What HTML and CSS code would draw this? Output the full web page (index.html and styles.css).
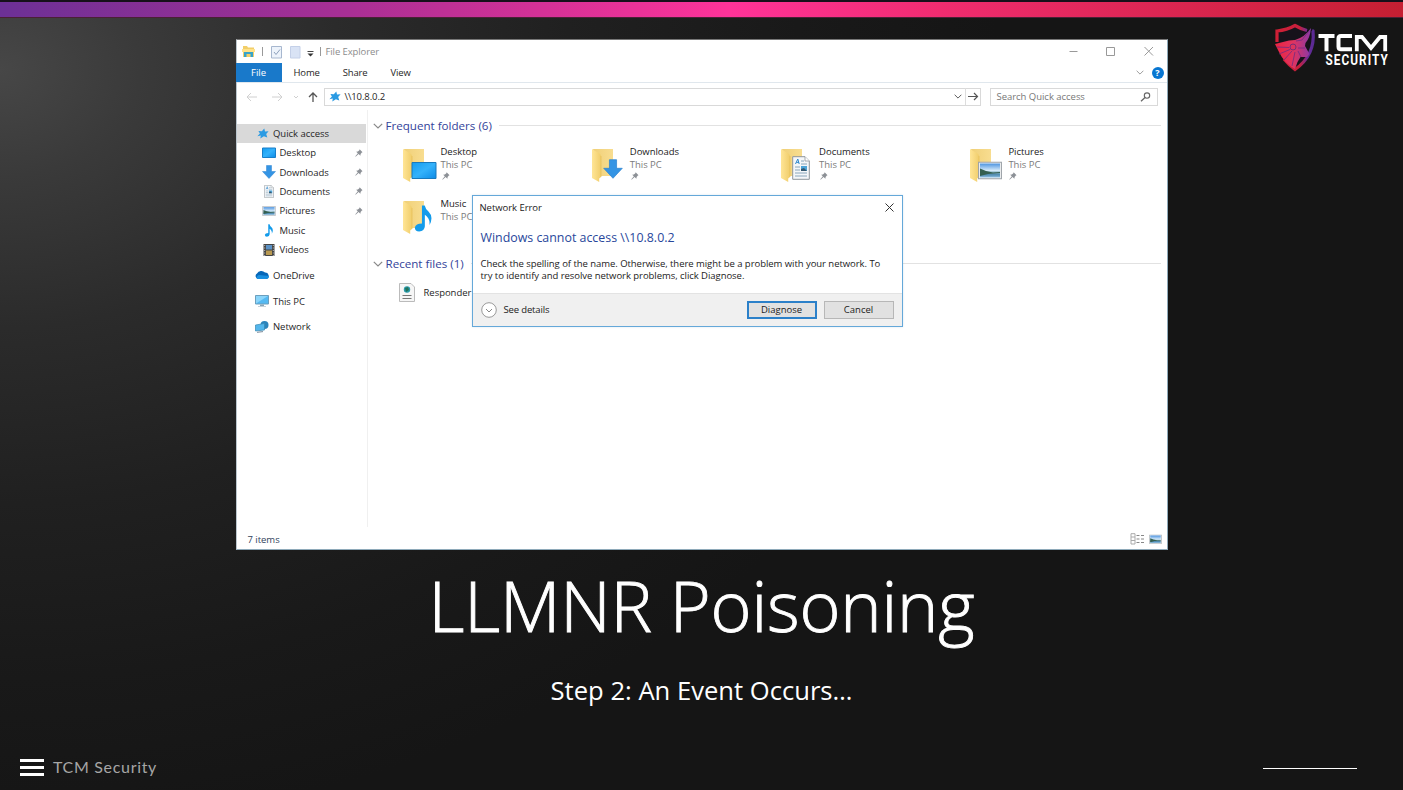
FILE: index.html
```
<!DOCTYPE html>
<html lang="en">
<head>
<meta charset="utf-8">
<title>LLMNR Poisoning</title>
<link rel="stylesheet" href="styles.css">
</head>
<body>
<svg class="defs" width="0" height="0" aria-hidden="true">
  <defs>
    <linearGradient id="gFold" x1="0" y1="0" x2="1" y2="0"><stop offset="0" stop-color="#ffe596"/><stop offset="1" stop-color="#f0cd6b"/></linearGradient>
    <linearGradient id="gBack" x1="0" y1="0" x2="1" y2="0"><stop offset="0" stop-color="#f0d078"/><stop offset="1" stop-color="#f8dd90"/></linearGradient>
    <linearGradient id="gBlue" x1="0" y1="0" x2="1" y2="1"><stop offset="0" stop-color="#129cf0"/><stop offset=".5" stop-color="#34b2fb"/><stop offset="1" stop-color="#0c8be6"/></linearGradient>
    <linearGradient id="gSky" x1="0" y1="0" x2="0" y2="1"><stop offset="0" stop-color="#4d94e0"/><stop offset=".5" stop-color="#d5eafa"/><stop offset=".62" stop-color="#8db8c8"/><stop offset=".8" stop-color="#4f8ab0"/><stop offset="1" stop-color="#8fc0e2"/></linearGradient>
    <linearGradient id="gRim" x1="0" y1="0" x2="1" y2="0"><stop offset="0" stop-color="#cf1f35"/><stop offset=".62" stop-color="#c7203d"/><stop offset=".85" stop-color="#6a2c98"/><stop offset="1" stop-color="#5a2a94"/></linearGradient>
    <linearGradient id="gDog" x1="0" y1="0" x2="1" y2="0"><stop offset="0" stop-color="#ec2340"/><stop offset=".5" stop-color="#e0345f"/><stop offset="1" stop-color="#8a38a8"/></linearGradient>
    <symbol id="pin" viewBox="0 0 9 9"><path d="M5.2.4 8.5 3.6 7.7 4 6.3 5.7 6.1 7.6 4 5.7.7 8.6.4 8.2 3.2 4.9 1.3 3 3.3 2.8 4.9 1.3Z" fill="#8c9096"/></symbol>
    <symbol id="star" viewBox="0 0 12 11"><path d="M7.3.5 8 3.6 11.6 3.3 9.2 6.1 10.3 9.4 6.9 8.2 3.3 10.6 3.8 7.6.4 8.2 2.9 5.6 1.4 3 4.8 3.3Z" fill="#2b9be3"/></symbol>
    <symbol id="chev" viewBox="0 0 10 6"><path d="M.8.8 5 5 9.2.8" fill="none" stroke="currentColor" stroke-width="1.2"/></symbol>
    <symbol id="folder" viewBox="0 0 34 36"><path d="M2 2H22V29H8Z" fill="url(#gBack)"/><path d="M1 2 8.500 6.500Q10 7.500 10 9V30L8.200 31.500V35L1 31Z" fill="url(#gFold)"/><path d="M10 9V30" stroke="#e5bd58" stroke-width=".7"/></symbol>
    <symbol id="down" viewBox="0 0 14 14"><path d="M4.5.5H9.5V6.5H13.5L7 13.5.5 6.5H4.5Z" fill="#3494e4" stroke="#2a82d0" stroke-width=".5"/></symbol>
    <symbol id="note" viewBox="0 0 18 26"><path d="M7.5.5H10.2Q10.8 4 14 6.5 19 11.5 14.7 19.5 15.6 13 10.3 9.5V20.5Q10 25.3 4.8 25.5.5 25 .7 21.5 1.5 17.8 7.5 17.8Z" fill="#139bea"/></symbol>
    <symbol id="doc" viewBox="0 0 18 24"><path d="M.7.7H13L17.3 5V23.3H.7Z" fill="#f5f7f9" stroke="#8f969c"/><path d="M13 .7V5H17.3" fill="#fff" stroke="#8f969c" stroke-width=".8"/><path d="M3.5 8 5.8 3 7.2 8M4.4 6.4H7" fill="none" stroke="#3189cd" stroke-width="1"/><path d="M9 5H12M9 8H15M3 11H8M3 14H8M3 17H15M3 20H15" stroke="#8aa6bb" stroke-width="1"/><path d="M9 10H15V15H9Z" fill="#4da4d8"/><path d="M9 13 12 12 15 15H9Z" fill="#36586f"/></symbol>
    <symbol id="pic" viewBox="0 0 24 18"><path d="M.6.6H23.4V17.4H.6Z" fill="#f8f9fa" stroke="#9ba1a7" stroke-width="1.1"/><path d="M2 2H22V16H2Z" fill="url(#gSky)"/><path d="M2 7 8 9.500 15 11 22 10.500V11.500L10 12.500 2 14.500Z" fill="#345f50"/></symbol>
    <symbol id="monitor" viewBox="0 0 14 12"><path d="M.5.5H13.5V9H.5Z" fill="#55b9f2" stroke="#6c9fbd"/><path d="M1 1H13L1 8.5Z" fill="#8bd5fa"/><path d="M5 9.5H9V11H11V11.6H3V11H5Z" fill="#8ba5b5"/></symbol>
  </defs>
</svg>
<div class="slide">
  <div class="stripe"></div>
  <svg class="logo" viewBox="0 0 116 50" width="116" height="50">
    <path d="M2 7Q13 6 21 1 29 6 39.500 7 42 32 21 48 0 32 2 7Z" fill="#16121b"/>
    <path d="M3 19V8Q13 7 21 2.500 27 6 33 7.500M38 7.500 39 8Q41.500 32 21 46.500 15 42 10 36" fill="none" stroke="url(#gRim)" stroke-width="3.200"/>
    <path d="M37 5Q36 15 31.500 20L31 23 35.500 31 33 34 26.500 34 23.500 39 21 46Q10 40 5 29L1 21 15 17.500 21 17Q31 14 37 5Z" fill="url(#gDog)"/>
    <path d="M3 24 15 24.500M5 31 16 26.500M10 37 18 28M18 43 21 29M22 18 28 17 35 8M24 25 31 25M24 28 27 34" fill="none" stroke="#6d2c83" stroke-width=".8"/>
    <circle cx="19" cy="24" r="3" fill="#dd345c" stroke="#752d78"/>
    <g fill="none" stroke="#fff" stroke-width="4"><path d="M44.500 13H60.500M52.500 13V28.300M78 13H67Q64.500 13 64.500 15.500V23.800Q64.500 26.300 67 26.300H78"/><path d="M82.800 28.300V14L88 14 97 25 106 14 111.200 14V28.300" stroke-width="3.800"/></g>
    <text transform="translate(51.500 42) scale(.76 1)" class="logo-text" textLength="82" lengthAdjust="spacing">SECURITY</text>
  </svg>
  <main class="window">
    <header class="titlebar">
      <svg width="89" height="22" viewBox="0 0 89 22"><path d="M6 5H10L11 6.500H17V16H6Z" fill="#f2ce68"/><path d="M5 8H18V11H5Z" fill="#ffe28a"/><path d="M7 16V11H16V16H13.500V13H9.500V16Z" fill="#36a3ca"/><path d="M25.500 6V15M83.500 6V15" stroke="#999"/><path d="M34.500 5.500H44.500V17H34.500Z" fill="#edf3fb" stroke="#a7b7cf"/><path d="M37 11 39 13.500 43 8.500" fill="none" stroke="#8da0bb"/><path d="M53.500 5.500H63V17H53.500Z" fill="#d9e3f5" stroke="#c4d0e8"/><path d="M70.500 10.500H76.500" stroke="#444"/><path d="M70.500 12.500H76.500L73.500 15.500Z" fill="#333"/></svg>
      <span class="app-name">File Explorer</span>
      <svg class="controls" width="100" height="22" viewBox="0 0 100 22"><path d="M2.500 10.500H10.500M39.500 6.500H47.500V14.500H39.500ZM77.500 6 86 14.500M86 6 77.500 14.500" fill="none" stroke="#999"/></svg>
    </header>
    <nav class="tabs"><span class="tab file">File</span><span class="tab home">Home</span><span class="tab share">Share</span><span class="tab view">View</span>
      <svg class="collapse" width="8" height="5"><use href="#chev"/></svg><span class="help">?</span></nav>
    <div class="address-row">
      <svg width="87" height="20" viewBox="0 0 87 20"><g fill="none"><path d="M10 10H20M14 6 10 10 14 14M35 10H45M41 6 45 10 41 14M57 9 59 11 61 9" stroke="#d0d0d0"/><path d="M76 15V6M72 10 76 6 80 10" stroke="#555" stroke-width="1.300"/></g></svg>
      <div class="address"><svg width="12" height="11"><use href="#star"/></svg><span>\\10.8.0.2</span><svg class="drop" width="8" height="5"><use href="#chev"/></svg><svg class="go" width="15" height="17" viewBox="0 0 15 17"><path d="M.5 0V17" stroke="#ddd"/><path d="M3 8.500H12M9 5 12.500 8.500 9 12" fill="none" stroke="#555" stroke-width="1.200"/></svg></div>
      <div class="search"><span>Search Quick access</span><svg width="11" height="10" viewBox="0 0 11 10"><circle cx="7" cy="3.600" r="2.700" fill="none" stroke="#666" stroke-width="1.100"/><path d="M5 5.500 1 9.300" stroke="#666" stroke-width="1.300"/></svg></div>
    </div>
    <div class="body">
      <aside class="sidebar">
        <div class="nav top active"><svg width="12" height="11"><use href="#star"/></svg><span>Quick access</span></div>
        <div class="nav"><svg width="14" height="12" viewBox="0 0 14 12"><path d="M.5 1H13.500V10.500H.5Z" fill="url(#gBlue)" stroke="#187fc9"/></svg><span>Desktop</span><svg class="pinned" width="8" height="8"><use href="#pin"/></svg></div>
        <div class="nav"><svg width="14" height="14"><use href="#down"/></svg><span>Downloads</span><svg class="pinned" width="8" height="8"><use href="#pin"/></svg></div>
        <div class="nav"><svg width="14" height="13"><use href="#doc"/></svg><span>Documents</span><svg class="pinned" width="8" height="8"><use href="#pin"/></svg></div>
        <div class="nav"><svg width="14" height="10"><use href="#pic"/></svg><span>Pictures</span><svg class="pinned" width="8" height="8"><use href="#pin"/></svg></div>
        <div class="nav"><svg width="14" height="13"><use href="#note"/></svg><span>Music</span></div>
        <div class="nav videos"><svg width="14" height="12" viewBox="0 0 14 12"><path d="M1.500 0H12.500V12H1.500Z" fill="#454545"/><path d="M4 1H10V5.500H4Z" fill="#5b91c5"/><path d="M4 6.500H10V11H4Z" fill="#b99a52"/><path d="M2.700 1V12M11.300 1V12" stroke="#bbb" stroke-dasharray="1 1.500"/></svg><span>Videos</span></div>
        <div class="nav top group"><svg width="14" height="10" viewBox="0 0 14 10"><path d="M3 9A3 3 0 0 1 2 3.500 5 5 0 0 1 10 2.500 3.500 3.500 0 0 1 12 9Z" fill="#0767b8"/><path d="M2 9A2.700 2.700 0 0 1 4 5L14 6Q14 9 11 9Z" fill="#198fe0"/></svg><span>OneDrive</span></div>
        <div class="nav top group"><svg width="14" height="12"><use href="#monitor"/></svg><span>This PC</span></div>
        <div class="nav top"><svg width="14" height="13" viewBox="0 0 14 13"><circle cx="9.500" cy="5" r="4" fill="#2b84bb"/><path d="M.5 5 9.500 3.500V10L.5 11Z" fill="#53b6ec" stroke="#3888b2" stroke-width=".7"/><path d="M2 12.300 8 11.600" stroke="#789"/></svg><span>Network</span></div>
      </aside>
      <section class="content">
        <h2 class="heading"><svg width="10" height="6"><use href="#chev"/></svg><span>Frequent folders (6)</span></h2>
        <div class="folders">
          <article class="folder"><svg width="36" height="36" viewBox="0 0 36 36"><use href="#folder" width="34" height="36"/><path d="M10 15.500H34V31.500H10Z" fill="url(#gBlue)" stroke="#1879bd"/></svg><div><b>Desktop</b><i>This PC</i><svg width="8" height="8"><use href="#pin"/></svg></div></article>
          <article class="folder"><svg width="36" height="36" viewBox="0 0 36 36"><use href="#folder" width="34" height="36"/><use href="#down" x="12" y="12" width="20" height="20"/></svg><div><b>Downloads</b><i>This PC</i><svg width="8" height="8"><use href="#pin"/></svg></div></article>
          <article class="folder"><svg width="36" height="36" viewBox="0 0 36 36"><use href="#folder" width="34" height="36"/><use href="#doc" x="12" y="9" width="18" height="24"/></svg><div><b>Documents</b><i>This PC</i><svg width="8" height="8"><use href="#pin"/></svg></div></article>
          <article class="folder"><svg width="36" height="36" viewBox="0 0 36 36"><use href="#folder" width="34" height="36"/><use href="#pic" x="9" y="14.500" width="24" height="18"/></svg><div><b>Pictures</b><i>This PC</i><svg width="8" height="8"><use href="#pin"/></svg></div></article>
          <article class="folder"><svg width="36" height="36" viewBox="0 0 36 36"><use href="#folder" width="34" height="36"/><use href="#note" x="12" y="6" width="19" height="27"/></svg><div><b>Music</b><i>This PC</i></div></article>
        </div>
        <h2 class="heading recent"><svg width="10" height="6"><use href="#chev"/></svg><span>Recent files (1)</span></h2>
        <div class="recent-file"><svg width="16" height="19" viewBox="0 0 16 19"><path d="M.5.500H12L15.500 4V18.500H.5Z" fill="#f6f6f6" stroke="#bbb"/><circle cx="8" cy="6.500" r="3.200" fill="#2a9bab"/><path d="M6 5 9 4 10 7 7 9" fill="#23735a"/><path d="M3.500 12.500H12.500M3.500 15.500H12.500" stroke="#777"/></svg><span>Responder</span></div>
      </section>
    </div>
    <footer class="status"><span>7 items</span><svg width="34" height="12" viewBox="0 0 34 12"><path d="M1 .7H5V11H1ZM1 4H5M1 7.500H5" fill="none" stroke="#aaa"/><path d="M6.500 2.500H9.500M11 2.500H14M6.500 6H9.500M11 6H14M6.500 9.500H9.500M11 9.500H14" stroke="#888"/><use href="#pic" x="19" y="1.500" width="13" height="9.500"/></svg></footer>
    <div class="dialog" role="dialog">
      <div class="dialog-title"><span>Network Error</span><svg width="9" height="9" viewBox="0 0 9 9"><path d="M.5.5 8.500 8.500M8.500.5.500 8.500" stroke="#333"/></svg></div>
      <h1>Windows cannot access \\10.8.0.2</h1>
      <p>Check the spelling of the name. Otherwise, there might be a problem with your network. To<br>try to identify and resolve network problems, click Diagnose.</p>
      <div class="actions"><svg width="16" height="16" viewBox="0 0 16 16"><circle cx="8" cy="8" r="7.300" fill="#fff" stroke="#999"/><path d="M5 7 8 10 11 7" fill="none" stroke="#888"/></svg><span>See details</span><button class="primary">Diagnose</button><button>Cancel</button></div>
    </div>
  </main>
  <h1 class="title">LLMNR Poisoning</h1>
  <p class="subtitle">Step 2: An Event Occurs…</p>
  <footer class="slide-footer"><svg width="24" height="17" viewBox="0 0 24 17"><path d="M0 1.500H24M0 8.500H24M0 15.500H24" stroke="#fff" stroke-width="3"/></svg><span>TCM Security</span><i class="rule"></i></footer>
</div>
</body>
</html>
```
FILE: styles.css
```
*{box-sizing:border-box}
body{margin:0;overflow:hidden;background:#161616}
h1,h2,p{margin:0;font-weight:400}
svg{flex:none;display:block}
.defs{position:absolute}
.slide{position:relative;width:1403px;height:790px;display:flex;flex-direction:column;align-items:center;background:radial-gradient(ellipse 1000px 760px at 0 70px,#474747 0,#3a3a3a 14%,#2b2b2b 34%,#202020 57%,#191919 80%,#151515 100%);font-family:"Open Sans","Noto Sans",sans-serif}
.stripe{width:100%;height:18px;flex:none;border-top:2px solid #16101a;border-bottom:1px solid #4a2035;background:linear-gradient(90deg,#6c3096,#a92f95 25%,#ff3399 52%,#f02c70 67%,#c51f32 100%)}
.logo{position:absolute;left:1274px;top:23px}
.logo-text{font:700 15.500px Roboto,sans-serif;fill:#fff}
.window{position:relative;margin-top:21px;width:932px;height:511px;flex:none;background:#fff;border:1px solid #8ea9b9;border-top-color:#777;border-left-color:#bbc6ce;font-size:9.5px;letter-spacing:-.03px;color:#262626;display:flex;flex-direction:column}
.titlebar{height:23px;display:flex;align-items:center;flex:none}
.app-name{color:#8c8c8c;letter-spacing:-.1px}
.controls{margin-left:auto}
.tabs{height:20px;flex:none;display:flex;align-items:center;border-bottom:1px solid #e0e7ed}
.tab.file{width:46px;height:19px;background:#1979ca;color:#fff;display:flex;align-items:center;justify-content:center;margin-left:-1px}
.home{margin-left:12px}.share{margin-left:23px}.view{margin-left:23px}
.home,.share,.view{letter-spacing:-.15px}
.collapse{color:#999;margin-left:auto}
.help{width:12px;height:12px;border-radius:50%;background:#0876d1;color:#fff;font-weight:700;font-size:9px;line-height:12px;text-align:center;margin:0 3px 0 8px}
.address-row{height:27px;display:flex;align-items:center;flex:none}
.address{width:657px;height:18px;border:1px solid #d9d9d9;display:flex;align-items:center;padding-left:4px}
.address span{margin-left:4px;letter-spacing:-.1px}
.drop{margin-left:auto;color:#555;margin-right:3px}
.search{margin-left:9px;width:168px;height:18px;border:1px solid #d9d9d9;display:flex;align-items:center;justify-content:space-between;padding:0 6px;color:#777}
.body{display:flex;flex:none;height:417px}
.sidebar{width:131px;border-right:1px solid #f0f0f0;padding-top:13.600px}
.nav{height:19.4px;display:flex;align-items:center;padding:0 4px 0 25px;gap:4px}
.nav.top{padding-left:18.500px}
.nav.active{width:129px;background:#d9d9d9;padding-left:20.500px}
.pinned{margin-left:auto}
.videos,.group{margin-bottom:6.300px}
.content{width:799px;padding:7px 6px 0 5px}
.heading{height:17px;display:flex;align-items:center;font-size:11.6px;letter-spacing:0;color:#33439a;gap:3px}
.heading svg{color:#888}
.heading::after{content:"";height:1px;background:#e2e2e2;flex:1;margin-left:4px}
.folders{display:grid;grid-template-columns:repeat(4,189.300px);grid-template-rows:52px 52px;padding:13px 0 0 29px}
.folder{display:flex;gap:3px}
.folder>svg{margin-top:-.500px}
.folder>div{margin-top:-1px}
.folder b,.folder i{display:block;font-style:normal;font-weight:400;height:12.500px;line-height:12px}
.folder b{color:#222}.folder i{color:#7b7b7b}
.folder div svg{margin:1px 0 0 1px}
.recent{margin-top:4px}
.recent-file{display:flex;align-items:center;gap:9px;margin:11px 0 0 26px}
.status{height:20px;margin-top:3px;display:flex;align-items:center;justify-content:space-between;padding:0 3px 1px 11px;color:#31435c}
.dialog{position:absolute;left:235px;top:155px;width:431px;height:132px;background:#fff;border:1px solid #65a8d9;color:#222;box-shadow:0 0 2px #77aad044;letter-spacing:-.045px}
.dialog-title{height:22px;padding:0 8px 0 7px;display:flex;align-items:center;justify-content:space-between}
.dialog h1{font-size:12.400px;line-height:18px;letter-spacing:0;color:#28479b;padding-left:8px;margin-top:11px}
.dialog p{font-size:9.500px;line-height:12px;margin:11px 0 0 8px;white-space:nowrap}
.actions{position:absolute;inset:97px 0 0;background:#f0f0f0;border-top:1px solid #e3e3e3;display:flex;align-items:center;padding:0 8px 1px;gap:7px}
.actions span{letter-spacing:-.15px}
.actions button{width:70px;height:18px;background:#e1e1e1;border:1px solid #b7b7b7;padding:0;font:9.500px "Open Sans",sans-serif;color:#222}
.actions .primary{margin-left:auto;border:2px solid #2b80c9}
.title{margin-top:5px;height:100px;font-size:70px;line-height:100px;font-weight:300;letter-spacing:-.2px;color:#fff;-webkit-text-stroke:.9px #fff;white-space:nowrap}
.subtitle{margin-top:18px;font-size:25.600px;line-height:36px;color:#fff;white-space:nowrap}
.slide-footer{position:absolute;left:20px;right:46px;top:757px;height:20px;display:flex;align-items:center;gap:9px;font:16px Lato,sans-serif;color:#a6a6a6}
.slide-footer span{letter-spacing:.680px;margin-top:-2px}
.rule{margin-left:auto;width:94px;height:1px;background:#fff;margin-top:3px}
```
